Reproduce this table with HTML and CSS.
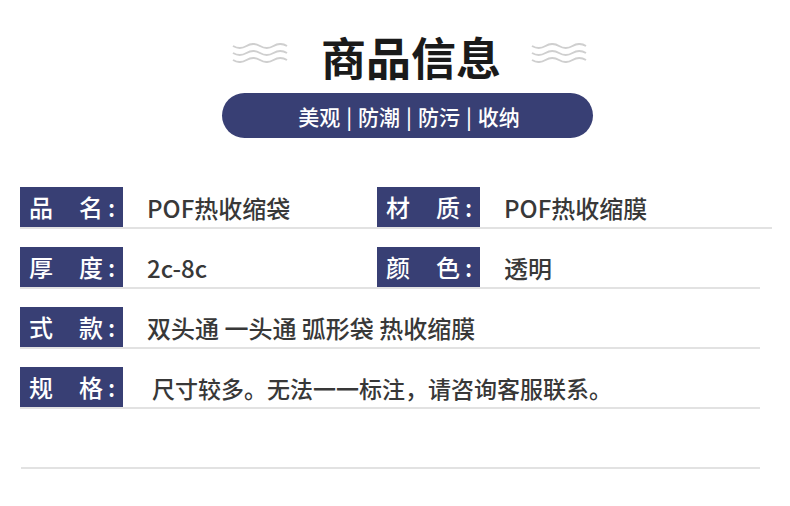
FILE: index.html
```html
<!DOCTYPE html>
<html lang="zh-CN">
<head>
<meta charset="utf-8">
<title>商品信息</title>
<link rel="stylesheet" href="styles.css">
</head>
<body>
<div class="page">
  <header class="head">
    <svg class="wave" width="56" height="20" viewBox="0 0 56 20" aria-hidden="true">
      <path d="M1 3 q6.75 4 13.5 0 t13.5 0 t13.5 0 t13.5 0" />
      <path d="M1 10 q6.75 4 13.5 0 t13.5 0 t13.5 0 t13.5 0" />
      <path d="M1 17 q6.75 4 13.5 0 t13.5 0 t13.5 0 t13.5 0" />
    </svg>
    <h1 class="title">商品信息</h1>
    <svg class="wave" width="56" height="20" viewBox="0 0 56 20" aria-hidden="true">
      <path d="M1 3 q6.75 4 13.5 0 t13.5 0 t13.5 0 t13.5 0" />
      <path d="M1 10 q6.75 4 13.5 0 t13.5 0 t13.5 0 t13.5 0" />
      <path d="M1 17 q6.75 4 13.5 0 t13.5 0 t13.5 0 t13.5 0" />
    </svg>
  </header>

  <div class="pill">美观<span class="sep">|</span>防潮<span class="sep">|</span>防污<span class="sep">|</span>收纳</div>

  <div class="specs">
    <div class="row row-long">
      <div class="cell cell-left">
        <span class="label"><span>品</span><span class="lg">名</span><span class="colon">:</span></span>
        <span class="value">POF热收缩袋</span>
      </div>
      <div class="cell">
        <span class="label"><span>材</span><span class="lg">质</span><span class="colon">:</span></span>
        <span class="value">POF热收缩膜</span>
      </div>
    </div>
    <div class="row">
      <div class="cell cell-left">
        <span class="label"><span>厚</span><span class="lg">度</span><span class="colon">:</span></span>
        <span class="value">2c-8c</span>
      </div>
      <div class="cell">
        <span class="label"><span>颜</span><span class="lg">色</span><span class="colon">:</span></span>
        <span class="value">透明</span>
      </div>
    </div>
    <div class="row">
      <div class="cell">
        <span class="label"><span>式</span><span class="lg">款</span><span class="colon">:</span></span>
        <span class="value">双头通 一头通 弧形袋 热收缩膜</span>
      </div>
    </div>
    <div class="row">
      <div class="cell">
        <span class="label"><span>规</span><span class="lg">格</span><span class="colon">:</span></span>
        <span class="value value-note">尺寸较多。无法一一标注，请咨询客服联系。</span>
      </div>
    </div>
    <div class="row row-empty"></div>
  </div>
</div>
</body>
</html>
```

FILE: styles.css
```css
* { box-sizing: border-box; }

html, body {
  margin: 0;
  padding: 0;
  background: #ffffff;
}

body {
  font-family: "Noto Sans CJK SC", "Noto Sans", sans-serif;
  color: #333333;
}

.page {
  width: 790px;
  height: 506px;
  overflow: hidden;
}

.head {
  display: flex;
  align-items: flex-start;
  padding-top: 35px;
  padding-left: 232px;
  height: 79px;
}

.wave {
  margin-top: 8px;
  fill: none;
  stroke: #cfcfcf;
  stroke-width: 2;
  flex: none;
}

.title {
  margin: 0 30px 0 33px;
  font-size: 45px;
  line-height: 44px;
  height: 44px;
  font-weight: 700;
  color: #1a1a1a;
}

.pill {
  margin: 14px 0 0 222px;
  width: 371px;
  height: 45px;
  border-radius: 23px;
  background: #383f74;
  color: #ffffff;
  font-size: 21px;
  font-weight: 500;
  display: flex;
  align-items: center;
  justify-content: center;
  padding-left: 3px;
}

.sep {
  margin: 0 6px;
}

.specs {
  margin: 49px 0 0 20px;
  display: flex;
  flex-direction: column;
  gap: 18px;
}

.row {
  display: flex;
  width: 740px;
  height: 42px;
  border-bottom: 2px solid #e2e2e2;
}

.row-long {
  width: 752px;
}

.row-empty {
  margin-left: 1px;
  width: 739px;
}

.cell {
  display: flex;
  align-items: center;
  height: 40px;
}

.cell-left {
  width: 357px;
  flex: none;
}

.label {
  flex: none;
  width: 103px;
  height: 40px;
  background: #383f74;
  color: #ffffff;
  font-size: 24px;
  font-weight: 500;
  line-height: 40px;
  display: flex;
  align-items: center;
  padding-left: 9px;
}

.lg {
  margin-left: 26px;
}

.colon {
  margin-left: 5px;
}

.value {
  margin-left: 24px;
  font-size: 24px;
  font-weight: 500;
  line-height: 40px;
  color: #383838;
  white-space: nowrap;
  padding-top: 2px;
}

.value-note {
  margin-left: 29px;
  font-size: 23px;
}
```
